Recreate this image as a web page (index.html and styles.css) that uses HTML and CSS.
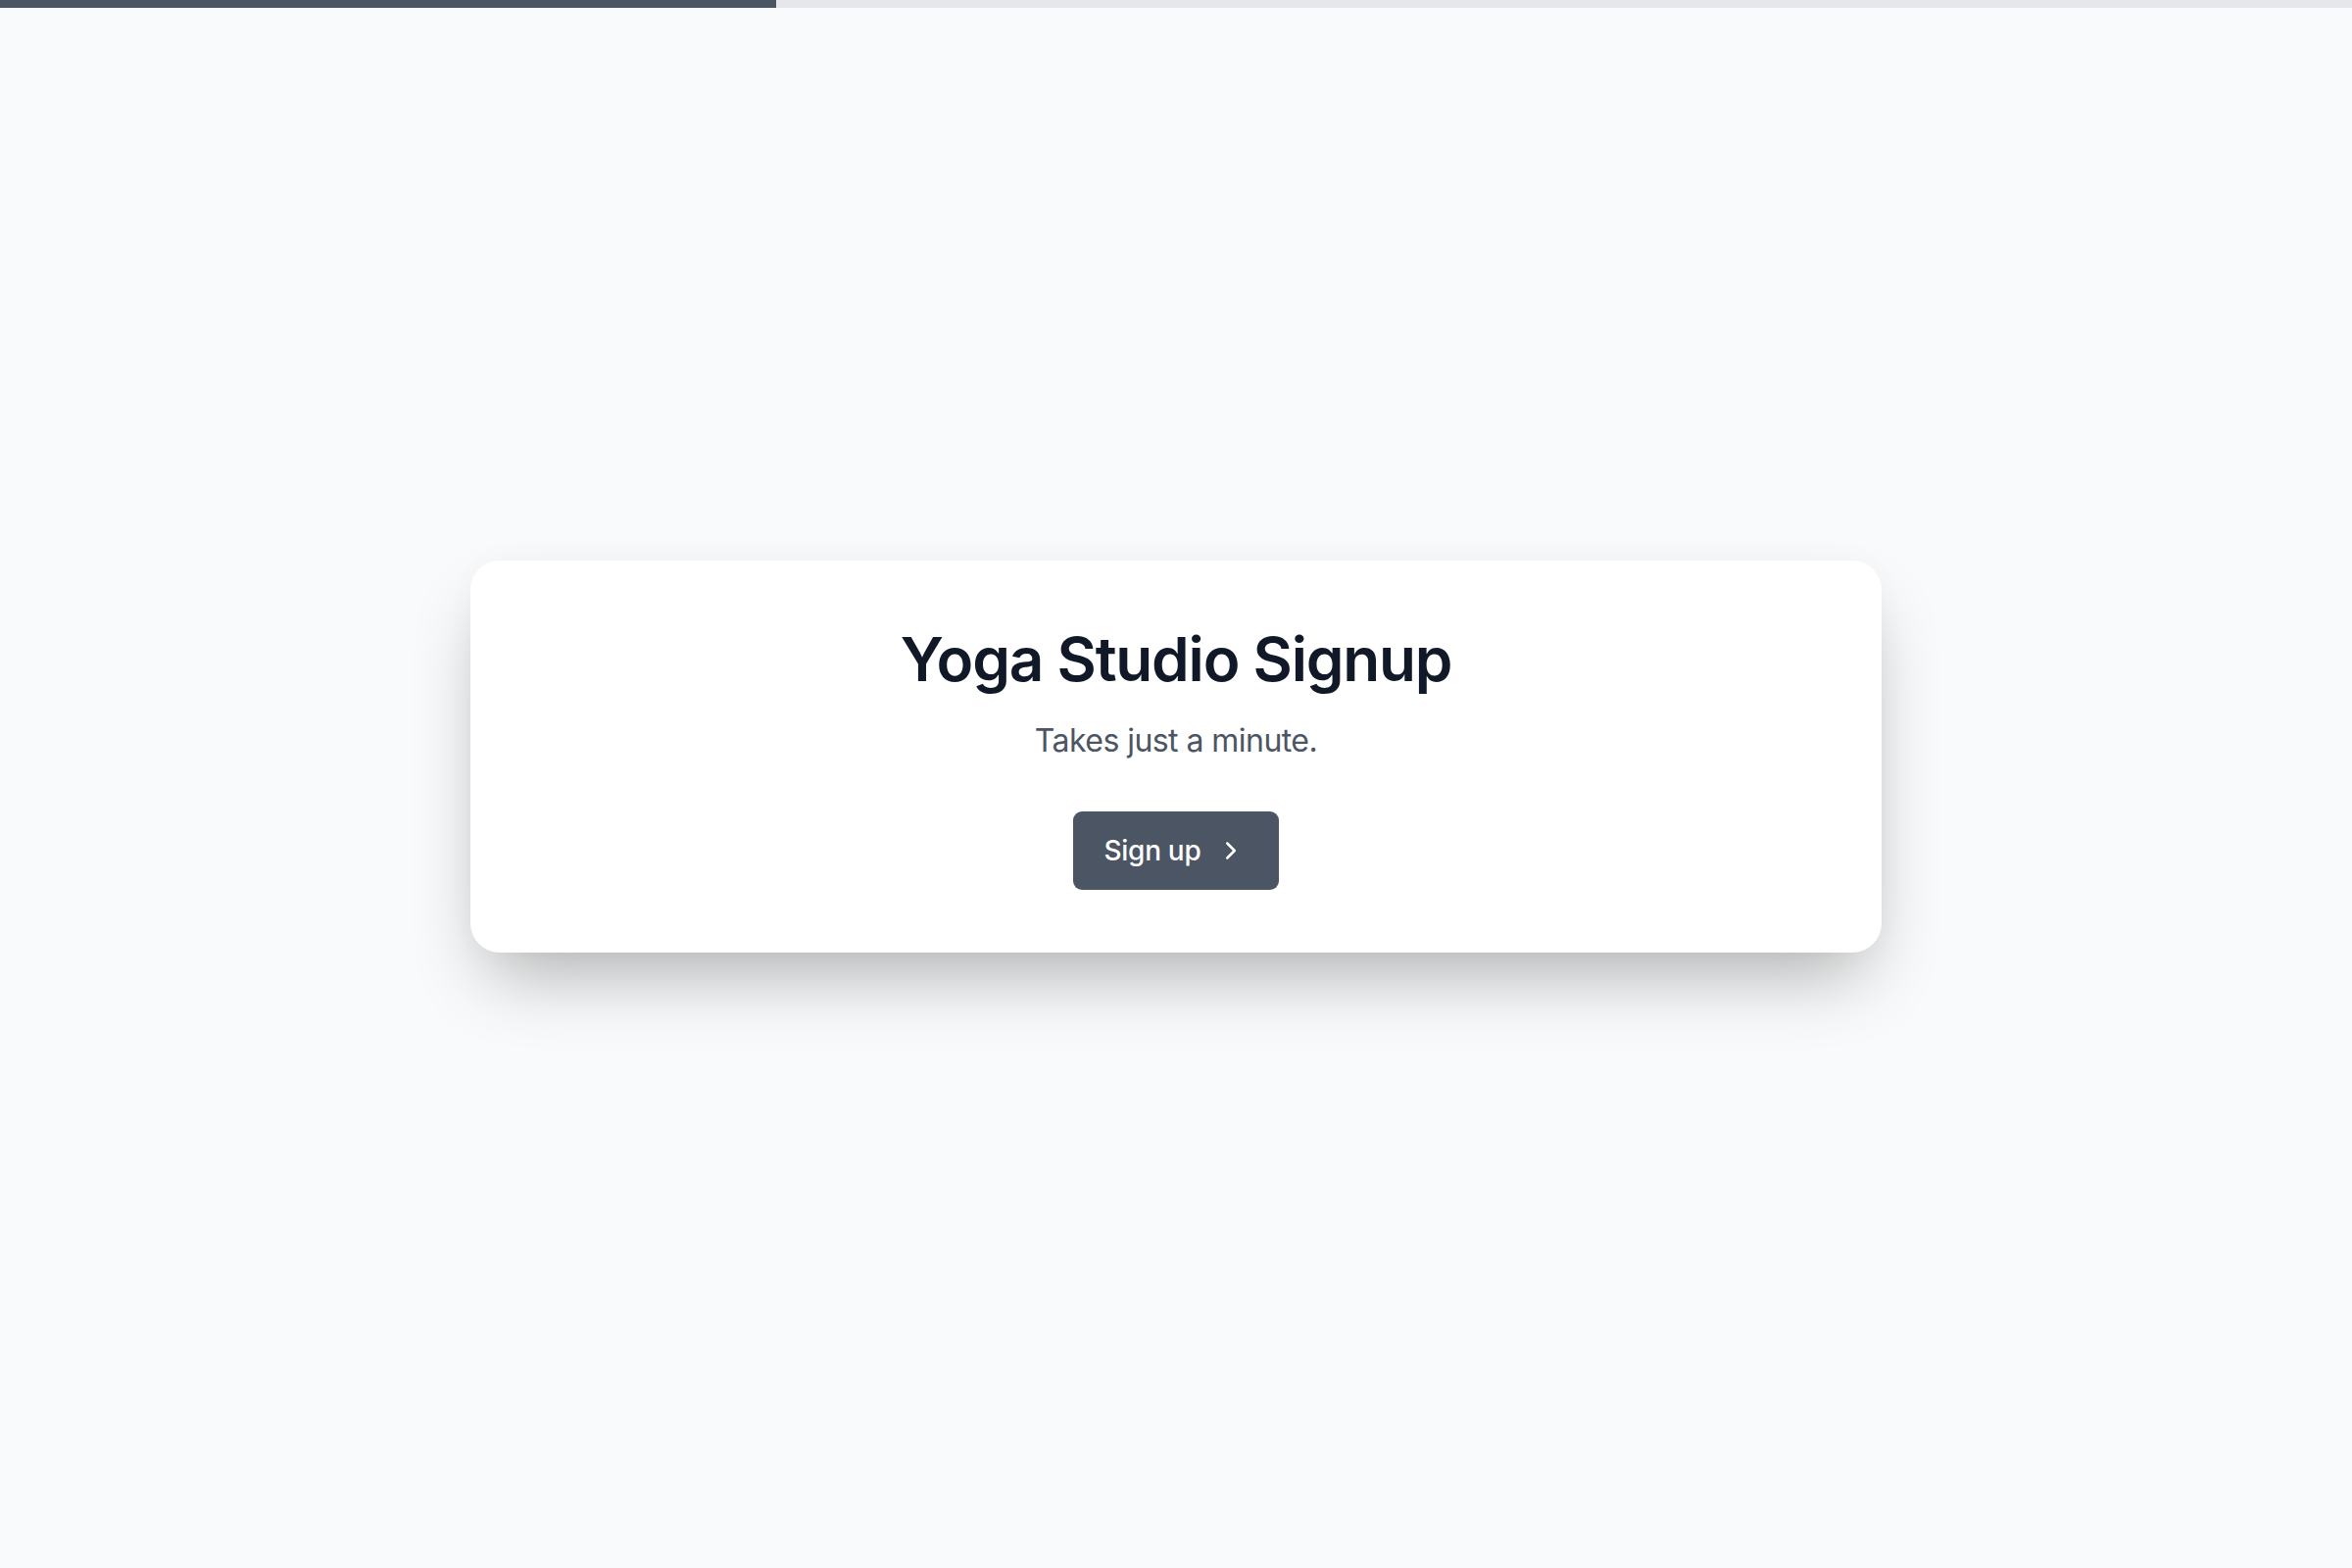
FILE: index.html
```html
<!DOCTYPE html>
<html lang="en">
<head>
<meta charset="utf-8">
<title>Yoga Studio Signup</title>
<link rel="stylesheet" href="styles.css">
</head>
<body>
  <div class="progress"><div class="progress-fill"></div></div>
  <main class="stage">
    <section class="card">
      <h1 class="title">Yoga Studio Signup</h1>
      <p class="subtitle">Takes just a minute.</p>
      <button class="cta" type="button">
        <span class="cta-label">Sign up</span>
        <svg class="cta-icon" viewBox="0 0 24 24" fill="none" stroke="currentColor" stroke-width="2" stroke-linecap="round" stroke-linejoin="round" aria-hidden="true"><path d="m9 18 6-6-6-6"/></svg>
      </button>
    </section>
  </main>
</body>
</html>
```
FILE: styles.css
```css
* { box-sizing: border-box; }
html, body { margin: 0; padding: 0; }
body {
  background: #f9fafb;
  font-family: Inter, "Noto Sans", "Liberation Sans", sans-serif;
  min-height: 1600px;
}
.progress {
  height: 8px;
  background: #e5e7eb;
}
.progress-fill {
  height: 100%;
  width: 33%;
  background: #4b5563;
}
.stage {
  display: flex;
  justify-content: center;
  padding-top: 564px;
}
.card {
  width: 1440px;
  height: 400px;
  background: #ffffff;
  border-radius: 30px;
  padding: 64px 48px;
  display: flex;
  flex-direction: column;
  align-items: center;
  box-shadow: 0 38px 75px -18px rgba(0, 0, 0, 0.3), 0 0 40px rgba(0, 0, 0, 0.02);
}
.title {
  margin: 0;
  font-size: 62px;
  line-height: 74px;
  font-weight: 600;
  color: #111827;
  letter-spacing: -1.2px;
}
.subtitle {
  margin: 22px 0 0;
  font-size: 32px;
  line-height: 48px;
  font-weight: 400;
  color: #4b5563;
  letter-spacing: -0.55px;
}
.cta {
  margin-top: 48px;
  height: 80px;
  padding: 0 34px 0 32px;
  display: flex;
  align-items: center;
  gap: 16px;
  background: #4b5563;
  color: #ffffff;
  border: none;
  border-radius: 9px;
  font-family: inherit;
  font-size: 28px;
  font-weight: 500;
  letter-spacing: -0.3px;
}
.cta-label { line-height: 40px; }
.cta-icon {
  width: 30px;
  height: 30px;
  display: block;
}
```
